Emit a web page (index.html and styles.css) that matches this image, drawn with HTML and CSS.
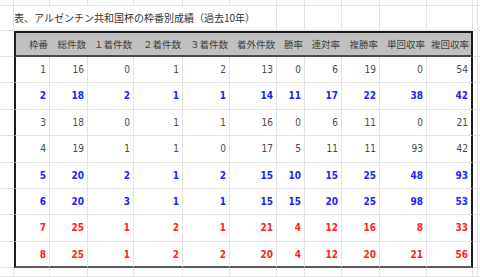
FILE: index.html
```html
<!DOCTYPE html>
<html lang="ja">
<head>
<meta charset="utf-8">
<title>枠番別成績</title>
<link rel="stylesheet" href="styles.css">
</head>
<body>
<table class="sheet">
<tbody>
<tr class="r-top"><td></td><td></td><td></td><td></td><td></td><td></td><td></td><td></td><td></td><td></td><td></td><td></td><td></td><td></td></tr>
<tr class="r-title"><td></td><td class="title" colspan="6">表、アルゼンチン共和国杯の枠番別成績（過去10年）</td><td></td><td></td><td></td><td></td><td></td><td></td><td></td></tr>
<tr class="r-head"><td class="edge"></td><th class="first">枠番</th><th>総件数</th><th>１着件数</th><th>２着件数</th><th>３着件数</th><th>着外件数</th><th>勝率</th><th>連対率</th><th>複勝率</th><th>単回収率</th><th class="last">複回収率</th><td></td><td></td></tr>
<tr class="r-data"><td class="edge"></td><td class="first">1</td><td>16</td><td>0</td><td>1</td><td>2</td><td>13</td><td>0</td><td>6</td><td>19</td><td>0</td><td class="last">54</td><td></td><td></td></tr>
<tr class="r-data blue"><td class="edge"></td><td class="first">2</td><td>18</td><td>2</td><td>1</td><td>1</td><td>14</td><td>11</td><td>17</td><td>22</td><td>38</td><td class="last">42</td><td></td><td></td></tr>
<tr class="r-data"><td class="edge"></td><td class="first">3</td><td>18</td><td>0</td><td>1</td><td>1</td><td>16</td><td>0</td><td>6</td><td>11</td><td>0</td><td class="last">21</td><td></td><td></td></tr>
<tr class="r-data"><td class="edge"></td><td class="first">4</td><td>19</td><td>1</td><td>1</td><td>0</td><td>17</td><td>5</td><td>11</td><td>11</td><td>93</td><td class="last">42</td><td></td><td></td></tr>
<tr class="r-data blue"><td class="edge"></td><td class="first">5</td><td>20</td><td>2</td><td>1</td><td>2</td><td>15</td><td>10</td><td>15</td><td>25</td><td>48</td><td class="last">93</td><td></td><td></td></tr>
<tr class="r-data blue"><td class="edge"></td><td class="first">6</td><td>20</td><td>3</td><td>1</td><td>1</td><td>15</td><td>15</td><td>20</td><td>25</td><td>98</td><td class="last">53</td><td></td><td></td></tr>
<tr class="r-data red"><td class="edge"></td><td class="first">7</td><td>25</td><td>1</td><td>2</td><td>1</td><td>21</td><td>4</td><td>12</td><td>16</td><td>8</td><td class="last">33</td><td></td><td></td></tr>
<tr class="r-data red end"><td class="edge"></td><td class="first">8</td><td>25</td><td>1</td><td>2</td><td>2</td><td>20</td><td>4</td><td>12</td><td>20</td><td>21</td><td class="last">56</td><td></td><td></td></tr>
<tr class="r-bottom"><td></td><td></td><td></td><td></td><td></td><td></td><td></td><td></td><td></td><td></td><td></td><td></td><td></td><td></td></tr>
</tbody>
</table>
</body>
</html>
```
FILE: styles.css
```css
html, body {
  margin: 0;
  padding: 0;
  background: #ffffff;
  overflow: hidden;
}

.sheet {
  display: grid;
  grid-template-columns: 14px 36px 38px 46px 49px 47px 47px 28px 37px 38px 47px 46px 5px 1fr;
  grid-template-rows: 6px 25px 26px repeat(8, 26.375px) 1fr;
  width: 480px;
  height: 277px;
  border-collapse: separate;
  border-spacing: 0;
  font-family: "Noto Sans CJK JP", sans-serif;
  color: #3a3a3a;
}

.sheet tbody,
.sheet tr {
  display: contents;
}

.sheet td,
.sheet th {
  display: block;
  box-sizing: border-box;
  margin: 0;
  padding: 0 3px 0 0;
  border-right: 1px solid #e3e3e3;
  border-bottom: 1px solid #e3e3e3;
  overflow: visible;
  white-space: nowrap;
}

.title {
  grid-column: span 6;
  padding: 0 0 0 2px;
  font-size: 10px;
  line-height: 24px;
  color: #333333;
}

.r-head th {
  background: #c0c0c0;
  border-top: 2px solid #1c1c1c;
  border-bottom: 2px solid #4a4a4a;
  border-right: none;
  font-weight: normal;
  font-size: 9.5px;
  line-height: 22px;
  text-align: right;
  padding-right: 2px;
  color: #404040;
}

.r-head th.first,
.r-data td.first {
  border-left: 2px solid #1c1c1c;
}

.r-head th.last,
.r-data td.last {
  border-right: 2px solid #1c1c1c;
}

.r-head td.edge,
.r-data td.edge {
  border-right: none;
}

.r-data td {
  font-family: "DejaVu Sans Condensed", "DejaVu Sans", sans-serif;
  font-size: 10px;
  line-height: 26px;
  text-align: right;
  color: #4a4a4a;
}

.blue td {
  color: #2222ff;
  font-weight: bold;
}

.red td {
  color: #ff2222;
  font-weight: bold;
}

.end td.first,
.end td.first ~ td:not(:nth-last-child(-n+2)) {
  border-bottom: 2px solid #5a5a5a;
}
```
